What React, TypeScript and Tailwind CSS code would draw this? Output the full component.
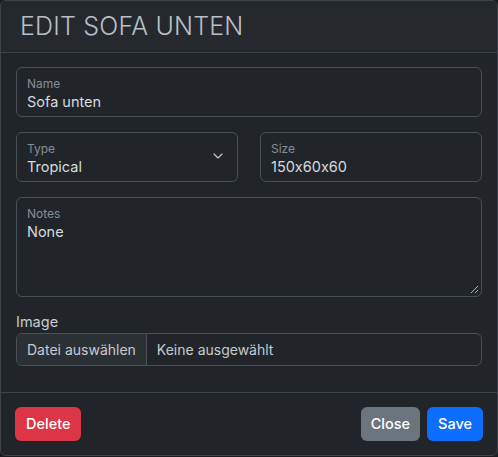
import { ChevronDown } from "lucide-react";

function FloatingField({ label, value, className = "" }: { label: string; value: string; className?: string }) {
  return (
    <div className={`rounded-md border border-[#495057] bg-[#212529] px-[10px] pt-[8px] ${className}`}>
      <div className="text-[12px] leading-[16px] text-[#868d94]">{label}</div>
      <div className="text-[14.5px] leading-[20px] text-[#d6dadf]">{value}</div>
    </div>
  );
}

export default function App() {
  return (
    <div
      className="h-[457px] w-[498px] bg-[#1a1d20]"
      style={{ fontFamily: "Inter, 'Noto Sans', sans-serif", fontFeatureSettings: "'calt' 0" }}
    >
      <div className="flex h-[456px] w-[498px] flex-col overflow-hidden rounded-md border border-[#3e4349] bg-[#212529]">
        <div className="flex h-[52px] items-center border-b border-[#3e4349] bg-[#25292d] px-[19px]">
          <h1 className="text-[25px] font-light tracking-[0.2px] text-[#b9bfc6]">EDIT SOFA UNTEN</h1>
        </div>

        <div className="flex flex-1 flex-col px-[15px] pt-[14px]">
          <FloatingField label="Name" value="Sofa unten" className="h-[50px]" />

          <div className="mt-[15px] grid grid-cols-2 gap-[22px]">
            <div className="relative">
              <FloatingField label="Type" value="Tropical" className="h-[50px]" />
              <ChevronDown size={16} strokeWidth={1.75} className="absolute right-[12px] top-[16px] text-[#c4c9ce]" />
            </div>
            <FloatingField label="Size" value="150x60x60" className="h-[50px]" />
          </div>

          <div className="relative mt-[15px]">
            <FloatingField label="Notes" value="None" className="h-[100px]" />
            <svg width="9" height="9" viewBox="0 0 9 9" className="absolute bottom-[3px] right-[3px]">
              <line x1="1" y1="8" x2="8" y2="1" stroke="#aab0b6" strokeWidth="1" />
              <line x1="5" y1="8" x2="8" y2="5" stroke="#aab0b6" strokeWidth="1" />
            </svg>
          </div>

          <div className="mt-[15px] text-[14.5px] leading-[20px] text-[#c6cbd0]">Image</div>
          <div className="mt-[1px] flex h-[33px] overflow-hidden rounded-md border border-[#495057] text-[14px]">
            <div className="flex items-center border-r border-[#495057] bg-[#2b3035] px-[10px] text-[#c6cbd0]">
              Datei auswählen
            </div>
            <div className="flex items-center px-[10px] text-[#c6cbd0]">Keine ausgewählt</div>
          </div>
        </div>

        <div className="flex h-[63px] items-center justify-between border-t border-[#3e4349] px-[14px]">
          <button className="h-[34px] rounded-md bg-[#dc3545] px-[11px] text-[14.5px] font-medium text-white">
            Delete
          </button>
          <div className="flex gap-[7px]">
            <button className="h-[34px] rounded-md bg-[#6c757d] px-[10px] text-[14.5px] font-medium text-white">
              Close
            </button>
            <button className="h-[34px] rounded-md bg-[#0d6efd] px-[11px] text-[14.5px] font-medium text-white">
              Save
            </button>
          </div>
        </div>
      </div>
    </div>
  );
}
